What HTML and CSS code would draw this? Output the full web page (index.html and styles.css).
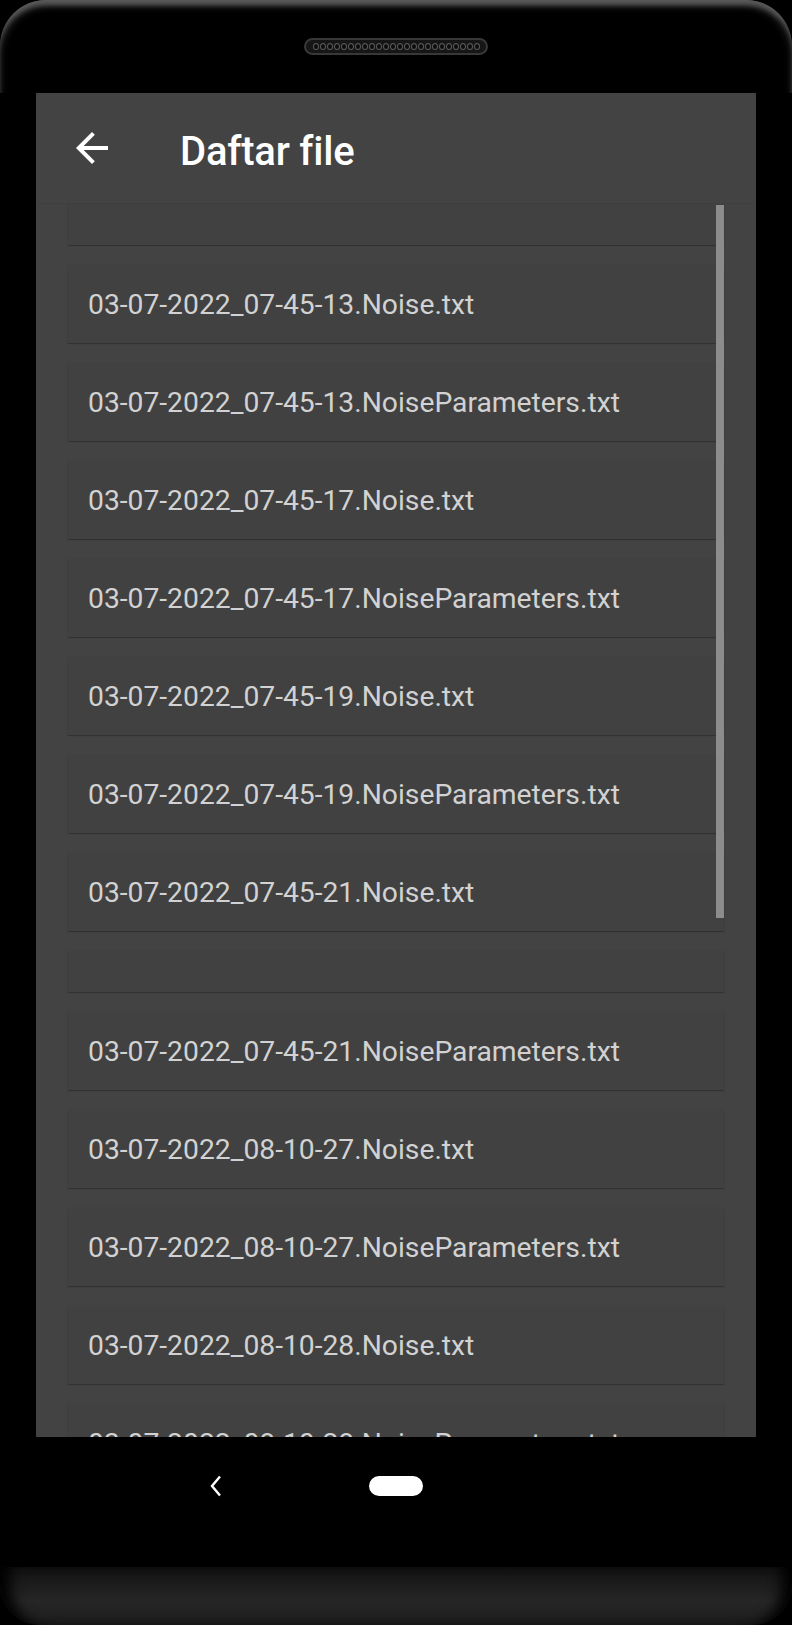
FILE: index.html
```html
<!DOCTYPE html>
<html lang="id">
<head>
    <meta charset="UTF-8">
    <meta name="viewport" content="width=device-width, initial-scale=1.0">
    <title>Daftar file</title>
    <link rel="stylesheet" href="styles.css">
</head>
<body>
    <div class="phone">
        <div class="bezel-top">
            <div class="speaker">
                <span></span><span></span><span></span><span></span><span></span><span></span>
                <span></span><span></span><span></span><span></span><span></span><span></span>
                <span></span><span></span><span></span><span></span><span></span><span></span>
                <span></span><span></span><span></span><span></span><span></span><span></span>
            </div>
        </div>

        <div class="screen">
            <div class="toolbar">
                <button class="nav-back" aria-label="Kembali">
                    <svg width="48" height="48" viewBox="0 0 24 24">
                        <path fill="#fff" d="M20 11H7.83l5.59-5.59L12 4l-8 8 8 8 1.41-1.41L7.83 13H20v-2z"/>
                    </svg>
                </button>
                <h1 class="title">Daftar file</h1>
            </div>

            <div class="file-list">
                <div class="file-card empty"></div>
                <div class="file-card">03-07-2022_07-45-13.Noise.txt</div>
                <div class="file-card">03-07-2022_07-45-13.NoiseParameters.txt</div>
                <div class="file-card">03-07-2022_07-45-17.Noise.txt</div>
                <div class="file-card">03-07-2022_07-45-17.NoiseParameters.txt</div>
                <div class="file-card">03-07-2022_07-45-19.Noise.txt</div>
                <div class="file-card">03-07-2022_07-45-19.NoiseParameters.txt</div>
                <div class="file-card">03-07-2022_07-45-21.Noise.txt</div>
                <div class="file-card empty"></div>
                <div class="file-card">03-07-2022_07-45-21.NoiseParameters.txt</div>
                <div class="file-card">03-07-2022_08-10-27.Noise.txt</div>
                <div class="file-card">03-07-2022_08-10-27.NoiseParameters.txt</div>
                <div class="file-card">03-07-2022_08-10-28.Noise.txt</div>
                <div class="file-card">03-07-2022_08-10-28.NoiseParameters.txt</div>

                <div class="scroll-thumb"></div>
            </div>
        </div>

        <div class="navbar">
            <div class="nav-keys">
                <svg class="key-back" width="14" height="22" viewBox="0 0 14 22">
                    <polyline points="11,1.5 3,11 11,20.5" fill="none" stroke="#fff" stroke-width="2.4"/>
                </svg>
                <span class="key-home"></span>
                <span></span>
            </div>
        </div>

        <div class="chin"></div>
    </div>
</body>
</html>
```

FILE: styles.css
```css
* {
    margin: 0;
    padding: 0;
    box-sizing: border-box;
}

body {
    background: #000;
    font-family: Roboto, 'Noto Sans', sans-serif;
}

.phone {
    width: 792px;
    height: 1625px;
    display: flex;
    flex-direction: column;
    background: #000;
}

.bezel-top {
    height: 93px;
    border-radius: 46px 46px 0 0;
    box-shadow: inset 0 6px 5px -2px #5c5c5c, inset 5px 10px 8px -6px #3a3a3a, inset -5px 10px 8px -6px #3a3a3a;
    display: flex;
    justify-content: center;
    padding-top: 38px;
}

.speaker {
    width: 184px;
    height: 17px;
    border-radius: 9px;
    background: #161616;
    border: 2px solid #383838;
    display: flex;
    justify-content: center;
    align-items: center;
    gap: 1px;
}

.speaker span {
    width: 6px;
    height: 7px;
    border-radius: 50%;
    border: 1px solid #5a5a5a;
    background: #0c0c0c;
}

.screen {
    margin: 0 36px;
    height: 1344px;
    background: #434343;
    display: flex;
    flex-direction: column;
    overflow: hidden;
}

.toolbar {
    height: 111px;
    flex-shrink: 0;
    display: flex;
    align-items: center;
    border-bottom: 1px solid #3f3f3f;
}

.nav-back {
    width: 112px;
    height: 111px;
    background: none;
    border: none;
    display: flex;
    align-items: center;
    justify-content: center;
    margin-right: 32px;
}

.title {
    color: #fff;
    font-size: 40px;
    font-weight: 500;
    margin-top: 6px;
    letter-spacing: -0.2px;
}

.file-list {
    position: relative;
    flex: 1;
    padding: 0 32px;
    display: flex;
    flex-direction: column;
    gap: 20px;
}

.file-card {
    height: 78px;
    flex-shrink: 0;
    background: #414141;
    box-shadow: 0 1px 1px rgba(0, 0, 0, 0.22), 0 0 1px rgba(0, 0, 0, 0.12);
    padding: 0 20px;
    display: flex;
    align-items: center;
    color: #d2d2d2;
    font-size: 28.25px;
    white-space: nowrap;
}

.file-card.empty {
    height: 41px;
}

.scroll-thumb {
    position: absolute;
    right: 32px;
    top: 1px;
    width: 8px;
    height: 713px;
    background: #8c8c8c;
}

.navbar {
    height: 130px;
    flex-shrink: 0;
    padding-top: 38px;
    display: flex;
    justify-content: center;
}

.nav-keys {
    display: grid;
    grid-template-columns: repeat(3, 180px);
    height: 20px;
    align-items: center;
    justify-items: center;
}

.key-home {
    width: 54px;
    height: 20px;
    border-radius: 10px;
    background: #fff;
}

.chin {
    height: 58px;
    border-radius: 0 0 40px 40px;
    background: linear-gradient(#111 0%, #1e1e1e 35%, #262626 60%, #1c1c1c 100%);
    box-shadow: inset 18px 0 14px -8px #000, inset -18px 0 14px -8px #000;
}
```
